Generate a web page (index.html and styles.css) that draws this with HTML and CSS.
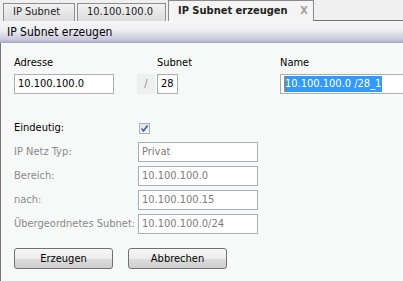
FILE: index.html
```html
<!DOCTYPE html>
<html>
<head>
<meta charset="utf-8">
<link rel="stylesheet" href="styles.css">
</head>
<body>
<div class="tabs">
  <div class="tab">IP Subnet</div>
  <div class="tab">10.100.100.0</div>
  <div class="tab active"><span>IP Subnet erzeugen</span><span class="close">X</span></div>
  <div class="tabfill"></div>
</div>
<div class="header">IP Subnet erzeugen</div>
<div class="panel">
  <div class="toprow">
    <div class="lbl">Adresse</div>
    <div></div>
    <div class="lbl">Subnet</div>
    <div class="lbl">Name</div>
    <div class="input w100">10.100.100.0</div>
    <div class="slash">/</div>
    <div class="input w20">28</div>
    <div class="input wname"><span class="sel">10.100.100.0 /28_1</span></div>
  </div>
  <div class="form">
    <div class="lbl dark">Eindeutig:</div>
    <div class="cbcell"><span class="cb"><svg width="9" height="9" viewBox="0 0 9 9"><path d="M1.5 4.5 L3.5 7 L7.5 1.5" fill="none" stroke="#3a5fa8" stroke-width="1.6"/></svg></span></div>
    <div class="lbl">IP Netz Typ:</div>
    <div class="input dis">Privat</div>
    <div class="lbl">Bereich:</div>
    <div class="input dis">10.100.100.0</div>
    <div class="lbl">nach:</div>
    <div class="input dis">10.100.100.15</div>
    <div class="lbl">Übergeordnetes Subnet:</div>
    <div class="input dis">10.100.100.0/24</div>
  </div>
  <div class="buttons">
    <div class="btn">Erzeugen</div>
    <div class="btn">Abbrechen</div>
  </div>
</div>
</body>
</html>
```
FILE: styles.css
```css
* { box-sizing: border-box; }
html, body { margin: 0; padding: 0; }
body {
  width: 403px;
  height: 281px;
  overflow: hidden;
  font-family: "DejaVu Sans Condensed", "DejaVu Sans", sans-serif;
  font-size: 11px;
  color: #000;
  background: #f7f9f9;
}
.tabs {
  display: flex;
  align-items: flex-end;
  height: 21px;
  padding-left: 3px;
  background: #f0f0f0;
}
.tab {
  height: 18px;
  margin-right: 2px;
  padding: 0 9px;
  line-height: 16px;
  border: 1px solid #8e8e8e;
  border-bottom: none;
  background: linear-gradient(#f2f2f2, #dcdcdc);
  color: #222;
  width: 72px;
}
.tab + .tab { width: 89px; }
.tab.active {
  width: 146px;
  height: 21px;
  margin-right: 0;
  background: #f4f4f4;
  border-color: #8a8a8a;
  font-weight: bold;
  line-height: 19px;
  display: flex;
  justify-content: space-between;
  padding: 0 5px 0 9px;
}
.close { color: #a0a0a0; font-size: 11px; font-weight: bold; }
.tabfill {
  flex: 1;
  height: 1px;
  background: #6e6e6e;
}
.header {
  height: 22px;
  padding-left: 7px;
  line-height: 22px;
  font-size: 12px;
  background: linear-gradient(#f6f6f9 0%, #eeeef4 40%, #c9c8da 85%, #a8a6c2 100%);
}
.panel {
  border-left: 1px solid #777;
  height: 238px;
  padding: 13px 0 0 13px;
}
.toprow {
  display: grid;
  grid-template-columns: 123px 20px 123px 130px;
  grid-template-rows: 14px 20px;
  row-gap: 4px;
}
.lbl { line-height: 14px; white-space: nowrap; color: #000; }
.input {
  height: 20px;
  border: 1px solid #a7aeb6;
  background: #fff;
  line-height: 18px;
  padding-left: 3px;
  white-space: nowrap;
  overflow: hidden;
}
.w100 { width: 100px; }
.w20 { width: 21px; }
.wname { width: 130px; padding-left: 3px; }
.sel { background: #3399ff; color: #fff; border-left: 1px solid #e07a10; display: inline-block; line-height: 16px; padding-right: 1px; }
.slash {
  width: 18px;
  height: 20px;
  background: #eef0f0;
  color: #8a8a8a;
  text-align: center;
  line-height: 20px;
}
.form {
  margin-top: 24px;
  display: grid;
  grid-template-columns: 124px 120px;
  grid-auto-rows: 20px;
  row-gap: 4px;
}
.form .lbl { line-height: 20px; color: #8a8a8a; }
.form .lbl.dark { color: #000; }
.input.dis { color: #7c7c7c; }
.cbcell { display: flex; align-items: center; padding-left: 1px; }
.cb {
  width: 11px;
  height: 11px;
  border: 1px solid #a9b1bb;
  background: linear-gradient(#e3e6ea, #f6f7f8);
  display: flex;
  align-items: center;
  justify-content: center;
}
.buttons {
  display: flex;
  gap: 15px;
  margin-top: 14px;
}
.btn {
  width: 99px;
  height: 21px;
  border: 1px solid #707070;
  border-radius: 3px;
  background: linear-gradient(#f7f7f7 0%, #ececec 50%, #dcdcdc 51%, #cfcfcf 100%);
  text-align: center;
  line-height: 19px;
}
```
